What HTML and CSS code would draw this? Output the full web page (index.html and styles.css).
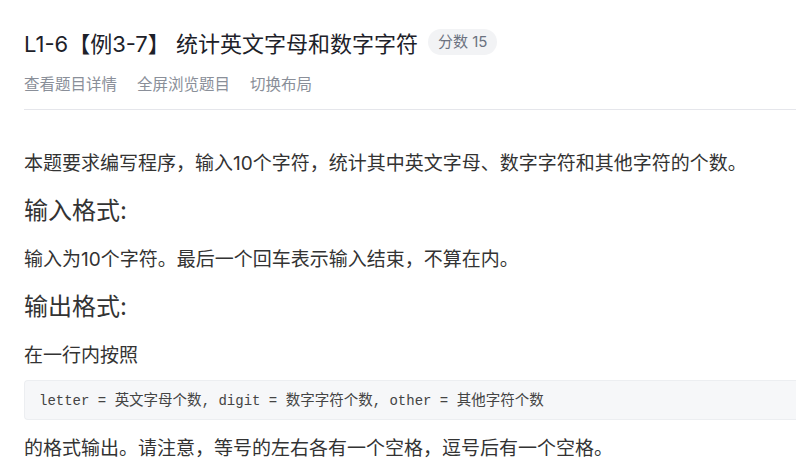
FILE: index.html
```html
<!DOCTYPE html>
<html lang="zh-CN">
<head>
    <meta charset="UTF-8">
    <meta name="viewport" content="width=device-width, initial-scale=1.0">
    <title>L1-6 统计英文字母和数字字符</title>
    <link rel="stylesheet" href="styles.css">
</head>
<body>
    <div class="page">
        <header class="problem-head">
            <div class="title-row">
                <h1 class="title">L1-6【例3-7】 统计英文字母和数字字符</h1>
                <span class="score">分数 15</span>
            </div>
            <nav class="actions">
                <a href="#">查看题目详情</a>
                <a href="#">全屏浏览题目</a>
                <a href="#">切换布局</a>
            </nav>
        </header>

        <section class="problem-body">
            <p>本题要求编写程序，输入10个字符，统计其中英文字母、数字字符和其他字符的个数。</p>
            <h2>输入格式:</h2>
            <p>输入为10个字符。最后一个回车表示输入结束，不算在内。</p>
            <h2>输出格式:</h2>
            <p>在一行内按照</p>
            <pre class="code">letter = <span class="zh">英文字母个数</span>, digit = <span class="zh">数字字符个数</span>, other = <span class="zh">其他字符个数</span></pre>
            <p>的格式输出。请注意，等号的左右各有一个空格，逗号后有一个空格。</p>
        </section>
    </div>
</body>
</html>
```

FILE: styles.css
```css
* {
    box-sizing: border-box;
}

body {
    margin: 0;
    background: #fff;
    color: #333;
    font-family: "Inter", "Noto Sans CJK SC", sans-serif;
}

.page {
    padding: 24px 0 0 24px;
}

.title-row {
    display: flex;
    align-items: center;
    gap: 10px;
    height: 36px;
}

.title {
    margin: 0;
    font-size: 22px;
    font-weight: 400;
    color: #1d2129;
    white-space: nowrap;
}

.score {
    background: #f2f3f5;
    color: #6b7280;
    font-size: 15px;
    line-height: 26px;
    border-radius: 13px;
    padding: 0 10px;
    white-space: nowrap;
}

.actions {
    display: flex;
    gap: 20px;
    padding: 14px 0 13px;
    border-bottom: 1px solid #e5e6eb;
    line-height: 22px;
}

.actions a {
    color: #8a8f99;
    font-size: 15.5px;
    text-decoration: none;
}

.problem-body {
    padding-top: 39px;
}

.problem-body p {
    margin: 0 0 14px;
    font-size: 19px;
    line-height: 30px;
    white-space: nowrap;
}

.problem-body h2 {
    margin: 0 0 16px;
    font-size: 24px;
    font-weight: 400;
    line-height: 36px;
}

.code {
    margin: -5px 0 14px;
    padding: 10px 14px;
    background: #f6f7f9;
    border: 1px solid #eceef1;
    border-right: none;
    border-radius: 4px 0 0 4px;
    font-family: "Liberation Mono", monospace;
    font-size: 14px;
    line-height: 15px;
    color: #444;
}

.code .zh {
    font-family: "Noto Sans CJK SC", sans-serif;
    font-size: 14.5px;
}
```
